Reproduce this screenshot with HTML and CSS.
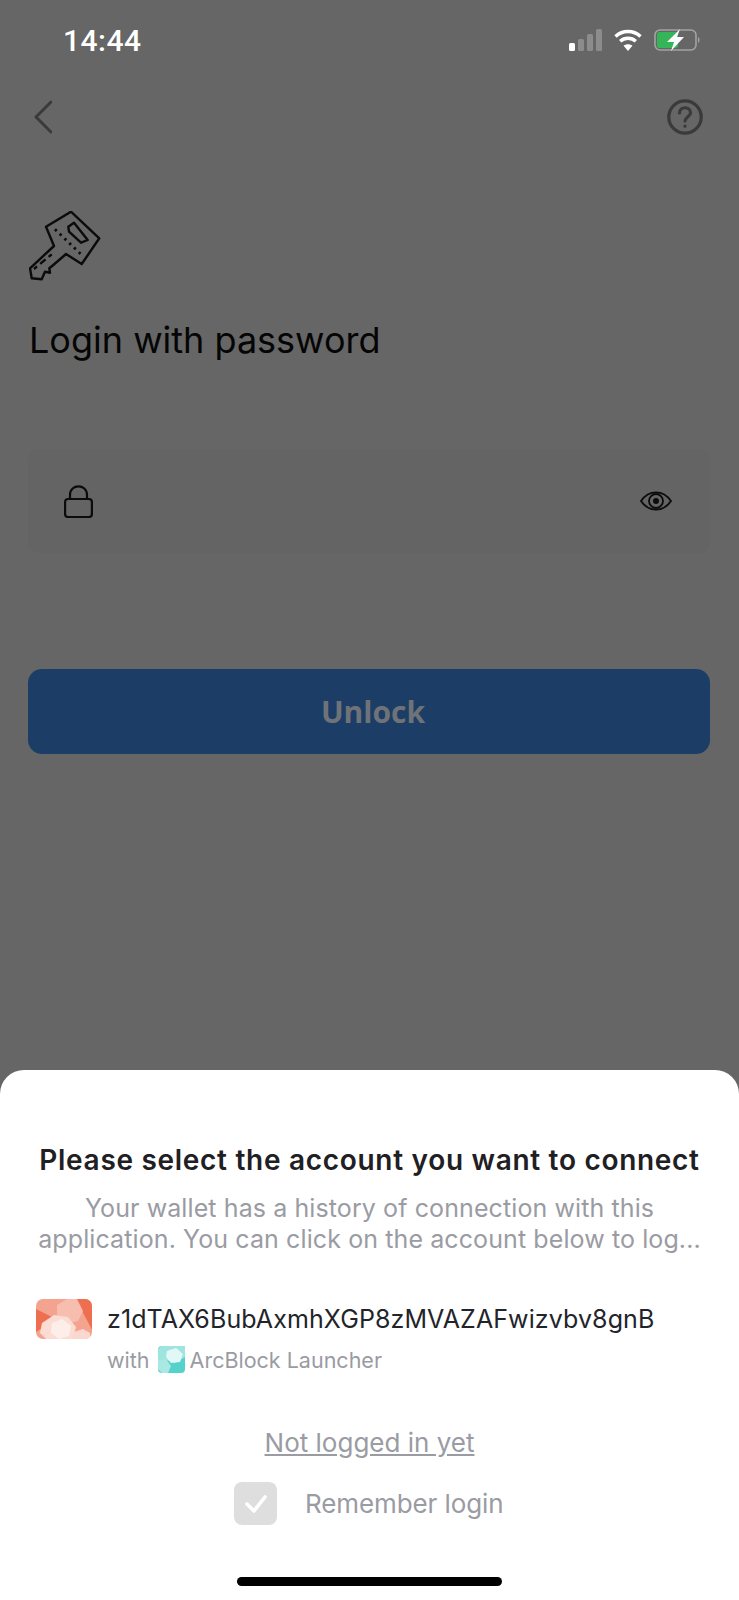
FILE: index.html
```html
<!DOCTYPE html>
<html lang="en">
<head>
  <meta charset="UTF-8" />
  <meta name="viewport" content="width=device-width, initial-scale=1.0" />
  <title>Login with password</title>
  <link rel="stylesheet" href="styles.css">
</head>
<body>
  <main class="screen">
    <div class="status">
      <span class="time">14:44</span>
      <div class="status-icons">
        <svg class="signal" width="33" height="22" viewBox="0 0 33 22">
          <rect x="0" y="14" width="6" height="8" rx="1.5" fill="#fff"/>
          <rect x="9" y="10" width="6" height="12" rx="1.5" fill="#8c8c8c"/>
          <rect x="18" y="5" width="6" height="17" rx="1.5" fill="#8c8c8c"/>
          <rect x="27" y="0" width="6" height="22" rx="1.5" fill="#8c8c8c"/>
        </svg>
        <svg class="wifi" width="28" height="22" viewBox="0 0 28 22" fill="none" stroke="#fff" stroke-width="3.4">
          <path d="M1.5 7.5C8.5 .8 19.5 .8 26.5 7.5"/>
          <path d="M6.2 12.2C10.5 8.2 17.5 8.2 21.8 12.2"/>
          <path d="M14 22l-4.4-5.2c2.5-2 6.3-2 8.8 0z" fill="#fff" stroke="none"/>
        </svg>
        <svg class="battery" width="47" height="22" viewBox="0 0 47 22">
          <rect x="1" y="1" width="41" height="20" rx="5" fill="none" stroke="#a3a3a3" stroke-width="1.6"/>
          <rect x="3" y="3" width="21" height="16" rx="2.500" fill="#35b558"/>
          <path d="M44 8c2 .6 2 5.400 0 6z" fill="#a3a3a3"/>
          <path d="M26 0L13 13h7l-3 9L30 8h-7z" fill="#fff"/>
        </svg>
      </div>
    </div>

    <nav class="nav">
      <svg width="18" height="34" viewBox="0 0 18 34" fill="none" stroke="#3a3a3a" stroke-width="3" stroke-linecap="round" stroke-linejoin="round">
        <path d="M17 2L2 17l15 15"/>
      </svg>
      <svg width="36" height="36" viewBox="0 0 36 36" fill="none" stroke="#3a3a3a" stroke-width="3.200" stroke-linecap="round">
        <circle cx="18" cy="18" r="16.200"/>
        <path d="M12.500 14c.2-7 11-7 11 0 0 3.500-5.500 4-5.500 8"/>
        <path d="M18 27v.2"/>
      </svg>
    </nav>

    <section class="login">
      <svg class="key" width="72" height="70" viewBox="0 0 72 70" fill="none" stroke="#0b0b0b" stroke-width="2.400" stroke-linecap="round" stroke-linejoin="round">
        <path d="M17 15.700L42 .7 70.300 27.300 52.700 53 37 43 24.300 54l-4 3.300.7 4.400-5-1-3.300 7.600-10-1L1 57.300 25 35z"/>
        <path d="M39.300 15.700L45 11.700 58.700 29 52 31.700 40 20.700z"/>
        <path d="M26 18.300L52.700 44" stroke-dasharray="2.400 4.200" stroke-width="2.800" stroke-linecap="butt"/>
        <path d="M5 58L22.700 43.300" stroke-dasharray="7 4" stroke-dashoffset="-8" stroke-linecap="butt"/>
      </svg>
      <h1 class="login-title">Login with password</h1>

      <div class="field">
        <svg width="29" height="33" viewBox="0 0 29 33" fill="none" stroke="#0b0b0b" stroke-width="2.200">
          <rect x="1.100" y="14" width="26.800" height="18" rx="3"/>
          <path d="M6 14V10c0-11.500 17-11.500 17 0v4"/>
        </svg>
        <svg width="32" height="20" viewBox="0 0 32 20" fill="none" stroke="#0b0b0b" stroke-width="1.800">
          <path d="M1 10C9-1.500 23-1.500 31 10 23 21.500 9 21.500 1 10z"/>
          <circle cx="16" cy="10" r="7"/>
          <circle cx="16" cy="10" r="3" fill="#0b0b0b" stroke="none"/>
        </svg>
      </div>

      <button class="unlock">Unlock</button>
    </section>
  </main>

  <section class="sheet">
    <h2 class="sheet-title">Please select the account you want to connect</h2>
    <p class="sheet-text">Your wallet has a history of connection with this<br>application. You can click on the account below to log...</p>

    <div class="account">
      <svg class="avatar" width="56" height="40" viewBox="0 0 56 40">
        <rect width="56" height="40" fill="#f4a38f"/>
        <path d="M40 0h16v31z" fill="#ee6f50"/>
        <path d="M0 10l20 10L0 33z" fill="#ee6f50"/>
        <path d="M21 6l10-6h10l6 12-5 10-12 3-9-8z" fill="#f7bdae"/>
        <path d="M6 24l12-8 14 2 8 10-3 12H10l-6-6z" fill="#fbdcd3"/>
        <path d="M16 24l10-4 9 7-2 10-10 3-8-6z" fill="#feeeea"/>
        <path d="M38 33l9-3 7 4v6H36z" fill="#fad8cf"/>
      </svg>
      <div class="account-info">
        <div class="address">z1dTAX6BubAxmhXGP8zMVAZAFwizvbv8gnB</div>
        <div class="wallet">
          <span>with</span>
          <svg class="wallet-icon" width="27" height="27" viewBox="0 0 27 27">
            <rect width="27" height="27" rx="4" fill="#55d2c9"/>
            <path d="M0 3l3-3h24v11l-10 6-9-3-8 4z" fill="#9fe5df"/>
            <path d="M9 5l9-3 7 6-3 8-9 1-5-6z" fill="#e2f8f6"/>
            <path d="M0 15l8-2 5 7-3 7H4l-4-4z" fill="#a9e8e3"/>
          </svg>
          <span>ArcBlock Launcher</span>
        </div>
      </div>
    </div>

    <a class="not-logged">Not logged in yet</a>

    <label class="remember">
      <span class="check">
        <svg width="24" height="20" viewBox="0 0 24 20" fill="none" stroke="#fff" stroke-width="3.600" stroke-linecap="round" stroke-linejoin="round">
          <path d="M3 10l7 7L21 3"/>
        </svg>
      </span>
      <span>Remember login</span>
    </label>

    <div class="home-bar"></div>
  </section>
</body>
</html>
```

FILE: styles.css
```css
* {
  box-sizing: border-box;
}
body {
  margin: 0;
  height: 1600px;
  background: #666;
  font-family: Inter, "Liberation Sans", sans-serif;
  display: flex;
  flex-direction: column;
  overflow: hidden;
}
.screen {
  flex: 1;
  padding: 0 29px 0 28px;
}
.status {
  display: flex;
  justify-content: space-between;
  align-items: center;
  height: 22px;
  margin-top: 29px;
  padding: 0 9px 0 35px;
}
.time {
  font-family: Roboto, sans-serif;
  font-size: 30px;
  font-weight: 500;
  letter-spacing: 0.5px;
  color: #fff;
}
.status-icons {
  display: flex;
  align-items: center;
  gap: 12px;
}
.nav {
  display: flex;
  justify-content: space-between;
  align-items: center;
  margin-top: 48px;
  padding: 0 7px 0 6px;
}
.login {
  margin-top: 76px;
}
.key {
  display: block;
  margin-left: 1px;
}
.login-title {
  margin: 39px 0 0 1px;
  font-size: 36px;
  line-height: 41px;
  font-weight: 400;
  color: #050505;
}
.field {
  display: flex;
  justify-content: space-between;
  align-items: center;
  height: 104px;
  margin-top: 88px;
  padding: 0 38px 0 36px;
  background: #646464;
  border-radius: 10px;
}
.unlock {
  display: block;
  width: 100%;
  height: 85px;
  margin-top: 116px;
  padding-left: 14px;
  background: #1c3e66;
  color: #6f7378;
  border: none;
  border-radius: 14px;
  font-family: "Open Sans", sans-serif;
  font-size: 30px;
  font-weight: 700;
}
.sheet {
  height: 530px;
  padding: 72px 36px 0;
  background: #fff;
  border-radius: 24px 24px 0 0;
  display: flex;
  flex-direction: column;
}
.sheet-title {
  margin: 0;
  font-size: 28px;
  line-height: 36px;
  font-weight: 600;
  letter-spacing: 0.7px;
  text-align: center;
  white-space: nowrap;
  color: #1f2024;
}
.sheet-text {
  margin: 15px 0 0;
  font-size: 25px;
  line-height: 31px;
  letter-spacing: 0.1px;
  text-align: center;
  white-space: nowrap;
  color: #9a9ba3;
}
.account {
  display: flex;
  gap: 15px;
  margin-top: 44px;
}
.avatar {
  flex: none;
  border-radius: 7px;
}
.address {
  font-size: 25px;
  line-height: 40px;
  letter-spacing: 0.1px;
  white-space: nowrap;
  color: #23242a;
}
.wallet {
  display: flex;
  align-items: center;
  gap: 5px;
  margin-top: 7px;
  font-size: 21.5px;
  color: #9a9ba3;
}
.wallet-icon {
  margin-left: 3px;
}
.not-logged {
  align-self: center;
  margin-top: 52px;
  font-size: 26px;
  line-height: 36px;
  color: #9a9ba3;
  text-decoration: underline;
}
.remember {
  display: flex;
  align-items: center;
  gap: 28px;
  margin: 21px 0 0 198px;
  font-size: 26px;
  letter-spacing: -0.1px;
  color: #9a9ba3;
}
.check {
  display: flex;
  justify-content: center;
  align-items: center;
  width: 43px;
  height: 43px;
  background: #dedede;
  border-radius: 8px;
}
.home-bar {
  width: 265px;
  height: 9px;
  margin: 52px 0 0 201px;
  background: #000;
  border-radius: 5px;
}
```
